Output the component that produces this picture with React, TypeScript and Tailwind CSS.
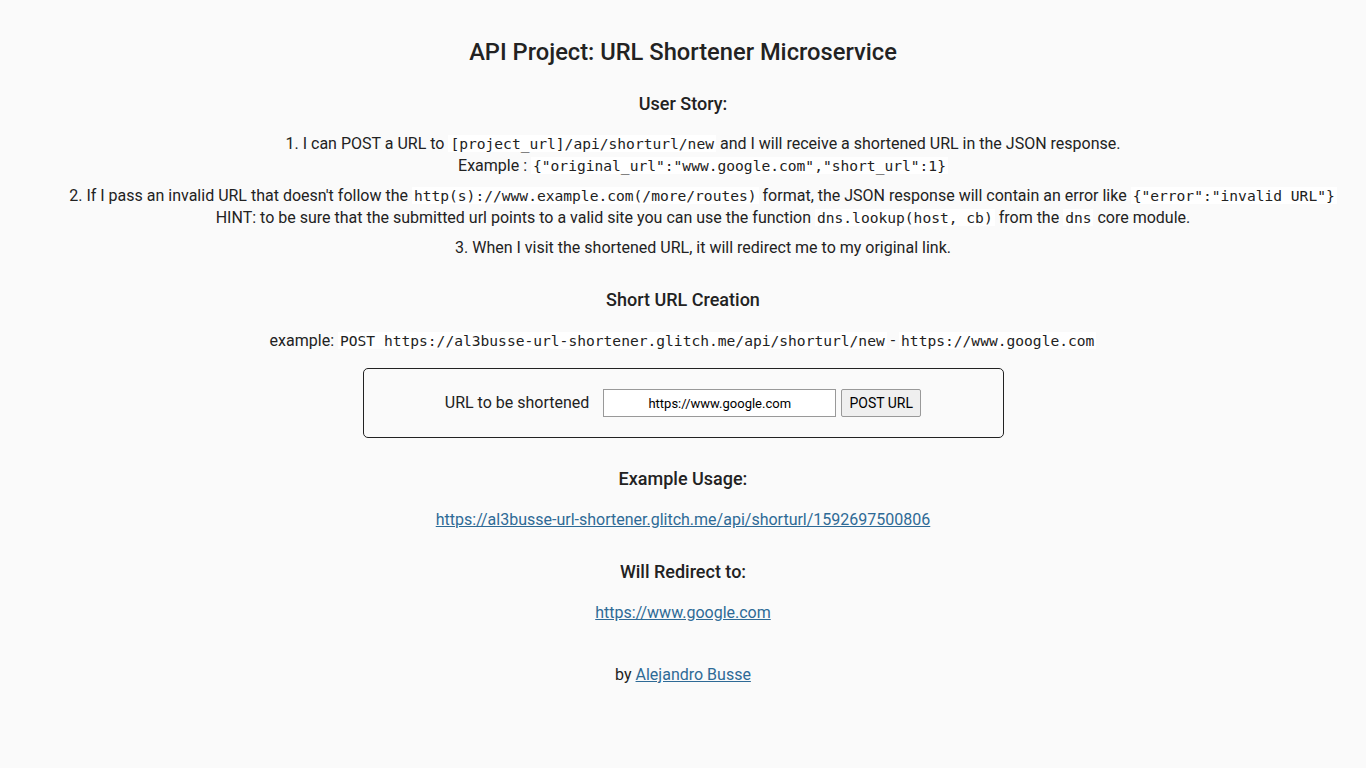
import React, { useState } from "react";

function Code({ children }: { children: React.ReactNode }) {
	return (
		<code className="bg-white px-[2px] font-['DejaVu_Sans_Mono',monospace] text-[14.6px]">
			{children}
		</code>
	);
}

export default function App() {
	const [url, setUrl] = useState("https://www.google.com");

	return (
		<div className="min-h-screen bg-[#fafafa] pt-[38px] pb-10 text-center font-['Roboto',sans-serif] text-[16px] leading-[22px] text-[#222]">
			<h1 className="text-[23.7px] leading-[28px] font-medium">API Project: URL Shortener Microservice</h1>

			<h3 className="mt-[27px] text-[18px] font-medium">User Story:</h3>
			<ol className="mt-[18px] flex flex-col gap-2 pl-10">
				<li>
					1. I can POST a URL to <Code>[project_url]/api/shorturl/new</Code> and I will receive a shortened URL in the JSON response.
					<br />
					Example : <Code>{'{"original_url":"www.google.com","short_url":1}'}</Code>
				</li>
				<li>
					2. If I pass an invalid URL that doesn't follow the <Code>http(s)://www.example.com(/more/routes)</Code> format, the JSON
					response will contain an error like <Code>{'{"error":"invalid URL"}'}</Code>
					<br />
					HINT: to be sure that the submitted url points to a valid site you can use the function <Code>dns.lookup(host, cb)</Code>{" "}
					from the <Code>dns</Code> core module.
				</li>
				<li>3. When I visit the shortened URL, it will redirect me to my original link.</li>
			</ol>

			<h3 className="mt-[30px] text-[18px] font-medium">Short URL Creation</h3>
			<p className="mt-[19px]">
				example: <Code>POST https://al3busse-url-shortener.glitch.me/api/shorturl/new</Code> - <Code>https://www.google.com</Code>
			</p>

			<form
				onSubmit={(e) => e.preventDefault()}
				className="mx-auto mt-4 flex h-[70px] w-[641px] items-center justify-center rounded-[5px] border border-[#222]"
			>
				<label htmlFor="url_input" className="mr-[14px]">
					URL to be shortened
				</label>
				<input
					id="url_input"
					value={url}
					onChange={(e) => setUrl(e.currentTarget.value)}
					className="h-[28px] w-[233px] border border-[#999] bg-white px-2 text-center text-[13px] text-black outline-none"
				/>
				<button
					type="submit"
					className="ml-[5px] h-[28px] w-[80px] rounded-[2px] border border-[#999] bg-[#efefef] text-[14px] text-black"
				>
					POST URL
				</button>
			</form>

			<h3 className="mt-[30px] text-[18px] font-medium">Example Usage:</h3>
			<p className="mt-[19px]">
				<a href="#" className="text-[#2e6a96] underline">
					https://al3busse-url-shortener.glitch.me/api/shorturl/1592697500806
				</a>
			</p>

			<h3 className="mt-[30px] text-[18px] font-medium">Will Redirect to:</h3>
			<p className="mt-[19px]">
				<a href="#" className="text-[#2e6a96] underline">
					https://www.google.com
				</a>
			</p>

			<p className="mt-10">
				by{" "}
				<a href="#" className="text-[#2e6a96] underline">
					Alejandro Busse
				</a>
			</p>
		</div>
	);
}
